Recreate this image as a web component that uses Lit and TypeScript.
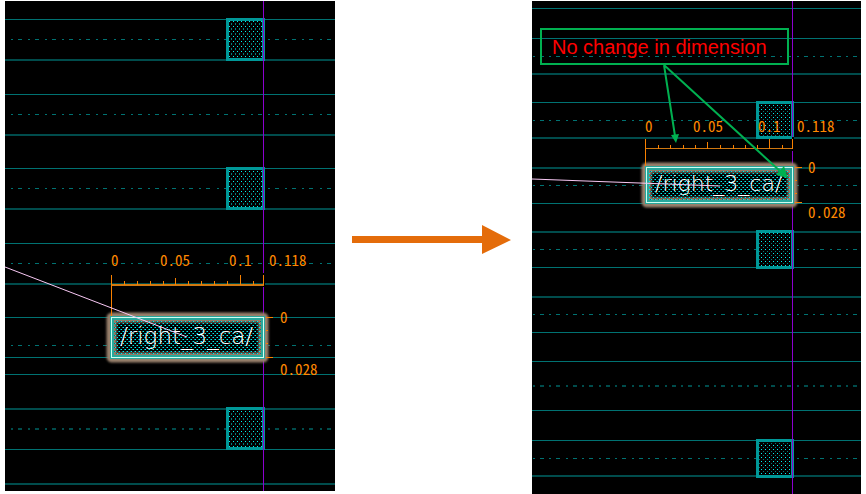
import { LitElement, html, svg, css } from "lit";
import { customElement, property } from "lit/decorators.js";

interface Box { x: number; y: number; w: number; h: number }
interface Label { x: number; y: number; text: string }
interface View {
  name: string;
  x: number; y: number; w: number; h: number;
  // solid tracks: [y, thickness]
  tracks: [number, number][];
  // dashed centre tracks: [y, thickness]
  dashed: [number, number][];
  dashStart: number;
  dashSteps: number[];
  cells: Box[];
  dotH: number;
  guide: number;
  selected: Box;
  flight: [number, number, number, number];
  ruler: { base: number; baseH: number; ticks: number[]; drop: number };
  labels: Label[];
  title: Label;
  titleClass: string;
}

const LEFT: View = {
  name: "Before",
  x: 5, y: 1, w: 330, h: 490,
  tracks: [[19, 1], [59, 2], [94, 1], [134, 2], [168, 1], [208, 2], [243, 1], [283, 2], [317, 1], [357, 1], [374, 1], [408, 2], [449, 1], [483, 2]],
  dashed: [[39, 1], [114, 1], [188, 1], [263, 1], [345, 1], [428, 2]],
  dashStart: 11,
  dashSteps: [17, 17, 17, 17, 17, 18],
  cells: [{ x: 226, y: 18, w: 39, h: 43 }, { x: 226, y: 167, w: 39, h: 43 }, { x: 226, y: 407, w: 39, h: 43 }],
  dotH: 5,
  guide: 263,
  selected: { x: 110, y: 316, w: 155, h: 43 },
  flight: [5, 267, 187, 337],
  ruler: { base: 284, baseH: 2, ticks: [111, 124, 137, 150, 163, 175, 188, 201, 214, 227, 240, 253, 263], drop: 316 },
  labels: [
    { x: 111, y: 266, text: "0" }, { x: 160, y: 266, text: "0.05" }, { x: 229, y: 266, text: "0.1" },
    { x: 269, y: 266, text: "0.118" }, { x: 280, y: 323, text: "0" }, { x: 280, y: 375, text: "0.028" },
  ],
  title: { x: 120, y: 344, text: "/right_3_ca/" },
  titleClass: "name large",
};

const RIGHT: View = {
  name: "After",
  x: 532, y: 1, w: 329, h: 493,
  tracks: [[8, 1], [38, 1], [73, 2], [102, 1], [137, 2], [167, 2], [203, 1], [231, 2], [267, 1], [296, 2], [332, 1], [361, 1], [410, 1], [440, 1], [475, 2]],
  dashed: [[56, 1], [120, 1], [185, 1], [249, 1], [314, 1], [385, 2], [458, 1]],
  dashStart: 533,
  dashSteps: [16, 17],
  cells: [{ x: 756, y: 101, w: 38, h: 38 }, { x: 756, y: 230, w: 38, h: 39 }, { x: 756, y: 439, w: 38, h: 39 }],
  dotH: 4,
  guide: 792,
  selected: { x: 645, y: 166, w: 149, h: 38 },
  flight: [532, 179, 720, 186],
  ruler: { base: 148, baseH: 1, ticks: [645, 658, 670, 683, 695, 707, 720, 733, 745, 757, 769, 782, 792], drop: 166 },
  labels: [
    { x: 645, y: 132, text: "0" }, { x: 693, y: 132, text: "0.05" }, { x: 758, y: 132, text: "0.1" },
    { x: 797, y: 132, text: "0.118" }, { x: 808, y: 173, text: "0" }, { x: 808, y: 218, text: "0.028" },
  ],
  title: { x: 655, y: 191, text: "/right_3_ca/" },
  titleClass: "name",
};

@customElement("layout-view")
class LayoutView extends LitElement {
  @property({ attribute: false }) view: View = LEFT;
  @property({ type: Boolean }) annotated = false;

  static styles = css`
    :host { display: block; }
    svg { display: block; width: 100%; height: auto; background: #000; }
    .thin { fill: #007272; }
    .wide { fill: #004c4c; }
    .edge { fill: #009898; }
    .void { fill: #000; }
    .dot { fill: #00f0f0; }
    .dim { fill: #007c7c; }
    .guide { fill: #8c00d0; }
    .orange { fill: #f88000; }
    .base { fill: #d07810; }
    .tan { fill: none; stroke: #98806c; }
    .outer { stroke-width: 7; }
    .inner { stroke-width: 5; }
    .teal { fill: #28a89c; }
    .white { fill: #d0fff0; }
    .flight { stroke: #f8c8f4; stroke-width: 1; }
    .label { fill: #ff8800; font: 400 15px "Noto Sans CJK JP", sans-serif; font-feature-settings: "hwid" 1; }
    .name { fill: #fff; font: 200 22px "DejaVu Sans", sans-serif; }
    .large { font-size: 23px; }
    .frame { fill: none; stroke: #00b050; stroke-width: 2; }
    .head { fill: #00b050; }
    .note { fill: #f00; font: 20px "Liberation Sans", Arial, sans-serif; }
  `;

  private dashes(y: number, h: number) {
    const v = this.view;
    let d = "";
    let x = v.dashStart;
    for (let i = 0; x < v.x + v.w - 5; i++) {
      d += `M${x} ${y}h2v${h}h-2zM${x + 7} ${y}h4v${h}h-4z`;
      x += v.dashSteps[i % v.dashSteps.length];
    }
    return svg`<path class=${h > 1 ? "wide" : "thin"} d=${d} />`;
  }

  private cell(b: Box) {
    return svg`
      <rect class="edge" x=${b.x} y=${b.y} width=${b.w} height=${b.h} />
      <rect class="void" x=${b.x + 3} y=${b.y + 3} width=${b.w - 6} height=${b.h - 6} />
      <rect fill="url(#dots)" x=${b.x + 3} y=${b.y + 3} width=${b.w - 6} height=${b.h - 6} />`;
  }

  // Rectangular outline between two insets of a box, on whole pixels.
  private ring(b: Box, from: number, to: number, cls: string) {
    const box = (i: number) =>
      `M${b.x + i} ${b.y + i}h${b.w - 2 * i}v${b.h - 2 * i}h${2 * i - b.w}z`;
    return svg`<path class=${cls} fill-rule="evenodd" d=${box(from) + box(to)} />`;
  }

  private ruler() {
    const { base, baseH, ticks, drop } = this.view.ruler;
    const first = ticks[0];
    const last = ticks[ticks.length - 1];
    const s = this.view.selected;
    return svg`
      <rect class="void" x=${last} y=${base - 11} width="2" height="14" />
      <rect class="base" x=${first} y=${base} width=${last - first + 1} height=${baseH} />
      <rect class="orange" x=${first} y=${base - 9} width="1" height=${drop - base + 9} />
      ${ticks.slice(1).map((x, i) => {
        const rise = i >= 11 || i === 9 ? 9 : i === 4 ? 6 : 3;
        return svg`<rect class="orange" x=${x} y=${base - rise} width="1" height=${rise + 1} />`;
      })}
      <rect class="orange" x=${s.x + s.w + 1} y=${s.y + 1} width="7" height="1" />
      <rect class="orange" x=${s.x + s.w + 1} y=${s.y + s.h - 2} width="7" height="1" />
      <rect class="orange" x=${s.x + s.w + 1} y=${s.y + 14} width="2" height="1" />
      <rect class="orange" x=${s.x + s.w + 1} y=${s.y + 27} width="2" height="1" />`;
  }

  private selection() {
    const s = this.view.selected;
    return svg`
      <rect class="tan outer" filter="url(#glow)" x=${s.x} y=${s.y} width=${s.w} height=${s.h} rx="2" />
      <rect class="void" x=${s.x + 2} y=${s.y + 2} width=${s.w - 4} height=${s.h - 4} />
      <rect class="tan inner" filter="url(#glow)" x=${s.x + 4} y=${s.y + 4} width=${s.w - 8} height=${s.h - 8} />
      <rect fill="url(#dense)" x=${s.x + 4} y=${s.y + 4} width=${s.w - 8} height=${s.h - 8} />
      ${this.ring(s, 0, 4, "teal")}
      ${this.ring(s, 1, 2, "white")}`;
  }

  render() {
    const v = this.view;
    const [x1, y1, x2, y2] = v.flight;
    return html`
      <svg viewBox="${v.x} ${v.y} ${v.w} ${v.h}" role="img" aria-label=${v.name}>
        <defs>
          <pattern id="dots" width="4" height=${v.dotH} patternUnits="userSpaceOnUse">
            <rect class="dot" x="1" y="1" width="1" height="1" />
            <rect class="dim" x="3" y="3" width="1" height=${v.dotH - 3} />
          </pattern>
          <pattern id="dense" width="4" height="4" patternUnits="userSpaceOnUse">
            <rect class="dim" x="0" y="1" width="2" height="1" />
            <rect class="dot" x="1" y="1" width="1" height="1" />
            <rect class="dim" x="2" y="3" width="2" height="1" />
            <rect class="dot" x="3" y="3" width="1" height="1" />
          </pattern>
          <filter id="glow" x="-10%" y="-30%" width="120%" height="160%"><feGaussianBlur stdDeviation="1" /></filter>
        </defs>
        ${v.tracks.map(([y, h]) => svg`<rect class=${h > 1 ? "wide" : "thin"} x=${v.x} y=${y} width=${v.w} height=${h} />`)}
        ${v.dashed.map(([y, h]) => this.dashes(y, h))}
        ${v.cells.map((b) => this.cell(b))}
        <rect class="guide" x=${v.guide} y=${v.y} width="1" height=${v.h} />
        ${this.selection()}
        ${this.ruler()}
        ${v.labels.map((l) => svg`<text class="label" x=${l.x} y=${l.y}>${l.text}</text>`)}
        <text class=${v.titleClass} x=${v.title.x} y=${v.title.y}>${v.title.text}</text>
        <line class="flight" x1=${x1} y1=${y1} x2=${x2} y2=${y2} />
        ${this.annotated
          ? svg`
            <rect class="frame" x="541" y="29" width="247" height="35" />
            <path class="frame" d="M664 65L675 136M664 65L781 172" />
            <path class="head" d="M676 143L671 135L679 134zM788 178L776 175L784 166z" />
            <text class="note" x="552" y="54">No change in dimension</text>`
          : null}
      </svg>`;
  }
}

@customElement("app-root")
class AppRoot extends LitElement {
  static styles = css`
    :host { display: block; background: #fff; }
    main {
      display: grid;
      grid-template-columns: 330fr 197fr 329fr;
      align-items: start;
      padding: 1px 5px 0;
    }
    .arrow { display: block; width: 100%; height: auto; fill: #e46c0a; }
  `;

  render() {
    return html`
      <main>
        <layout-view .view=${LEFT}></layout-view>
        <svg class="arrow" viewBox="335 1 197 490" role="img" aria-label="becomes">
          <path d="M352 236H482V225L511 240L482 254V243H352z" />
        </svg>
        <layout-view .view=${RIGHT} annotated></layout-view>
      </main>`;
  }
}
